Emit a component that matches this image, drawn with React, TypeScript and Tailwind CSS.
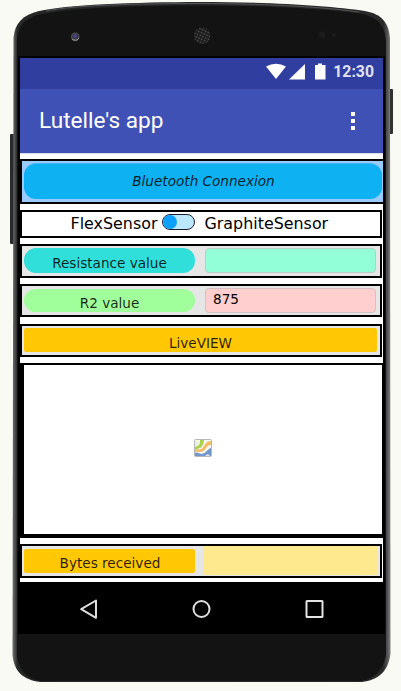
import type { ReactNode } from "react";

function DeviceShell() {
  return (
    <svg className="absolute inset-0" width="401" height="691" viewBox="0 0 401 691" aria-hidden="true">
      <defs>
        <linearGradient id="rim" x1="12" x2="391" y1="0" y2="0" gradientUnits="userSpaceOnUse">
          <stop offset="0" stopColor="#77797a" />
          <stop offset="0.008" stopColor="#4b4c4d" />
          <stop offset="0.014" stopColor="#252626" />
          <stop offset="0.98" stopColor="#29292a" />
          <stop offset="0.991" stopColor="#555456" />
          <stop offset="1" stopColor="#8b8b8b" />
        </linearGradient>
        <radialGradient id="lens">
          <stop offset="0" stopColor="#4a478b" />
          <stop offset="0.45" stopColor="#343345" />
          <stop offset="0.8" stopColor="#4a4a4b" />
          <stop offset="1" stopColor="#1c1c1c" />
        </radialGradient>
        <pattern id="mesh" width="3" height="3" patternUnits="userSpaceOnUse" patternTransform="rotate(25)">
          <rect width="3" height="3" fill="#1c1c1c" />
          <circle cx="1.5" cy="1.5" r="0.8" fill="#5a5a5a" />
        </pattern>
      </defs>
      <rect x="10" y="134" width="5" height="110" rx="1" fill="#292a2b" />
      <rect x="388" y="89" width="5" height="45" rx="1" fill="#303031" />
      <path
        d="M12.5 655 L13.5 38 C14.5 23 23 15 39 11 C65 5 133 2 201 2 C270 2 330 6 365 11 C382 14 389 23 390 39 L390.5 654 C388 672 378 680 362 682 L40 682 C24 680 14 672 12.5 655Z"
        fill="url(#rim)"
      />
      <path
        d="M17 655 L17 40 C18 25 26 17 42 14 C70 8 137 5.5 201 5.5 C268 5.5 328 9 363 14 C379 18 385 27 386 41 L386 655 C383 671 373 680 360 681 L41 681 C27 679 19 671 17 655Z"
        fill="#131313"
      />
      <path d="M46 11 C75 5 138 3.5 201 3.5 C264 3.5 325 7 359 12" fill="none" stroke="#555657" strokeWidth="1" />
      <circle cx="75.2" cy="36.8" r="4.8" fill="url(#lens)" />
      <path d="M72 39 Q76 42 79 38" fill="none" stroke="#9a9a99" strokeWidth="1" />
      <circle cx="75" cy="35.8" r="1.6" fill="#4b4692" />
      <circle cx="202.2" cy="35.8" r="8.3" fill="url(#mesh)" />
      <circle cx="322" cy="35" r="3.5" fill="#1b1b1b" />
      <circle cx="334" cy="35" r="2" fill="#1d1d1d" />
    </svg>
  );
}

function StatusBar() {
  return (
    <div className="flex h-[31px] shrink-0 items-start justify-end bg-[#303f9f] pr-[9px]">
      <svg className="mt-[5px] mr-[7px]" width="60" height="17" viewBox="0 0 60 17" fill="#fff" aria-hidden="true">
        <path d="M0 3.5 Q10 -2 20 3.5 L10 16Z" />
        <path d="M39 1 V16.5 H23Z" />
        <path d="M49 2 H52 V0.5 H56 V2 H59.5 V16.5 H49Z" />
      </svg>
      <span className="mt-[4px] font-['Roboto',sans-serif] text-[15.8px] leading-[20px] font-bold text-[#e0e2f1]">12:30</span>
    </div>
  );
}

function AppBar() {
  return (
    <div className="flex h-[64px] shrink-0 items-center justify-between bg-[#3f51b5] pr-[28px] pl-[19px] text-white">
      <h1 className="font-['Roboto',sans-serif] text-[22.6px] leading-[30px]">Lutelle's app</h1>
      <div className="flex flex-col gap-[3px]">
        <i className="size-[4px] bg-white" />
        <i className="size-[4px] bg-white" />
        <i className="size-[4px] bg-white" />
      </div>
    </div>
  );
}

function Row({ className, children }: { className: string; children: ReactNode }) {
  return <div className={`mr-px flex shrink-0 border-2 border-black ${className}`}>{children}</div>;
}

function Label({ className, children }: { className: string; children: ReactNode }) {
  return (
    <button className={`flex w-[171px] shrink-0 items-center justify-center text-[13.6px] text-black/85 ${className}`}>
      {children}
    </button>
  );
}

function MapThumb() {
  return (
    <svg width="18" height="19" viewBox="0 0 18 19" aria-hidden="true">
      <rect x="0.5" y="0.5" width="17" height="17" rx="1" fill="#f8f8f5" stroke="#b5b7bb" />
      <path d="M1.5 1.5 H4 V6 L1.5 8Z" fill="#e9f0d5" />
      <path d="M6 1 H10 C9.5 6 8 8 6 9 C4 10 2.5 10 1 11 V8 C5 7 6 5 6 1Z" fill="#a9d34d" />
      <path d="M17 2 V6 C12 5.5 12.5 12 7 13 C4 13.5 3 12 1 13 V11 C4 9.5 6 11 8 9.5 C11 7 11 2 17 2Z" fill="#f3bc68" />
      <path d="M17 9 V17 H1 V14 C4 12.5 6 16 9 14.5 C13 13.5 13 10 17 9Z" fill="#7397cc" />
      <path d="M11 17 Q14 13.5 16 17Z" fill="#dce7f4" />
    </svg>
  );
}

function NavBar() {
  return (
    <div className="flex h-[52px] shrink-0 items-center justify-between bg-black px-[59px] pt-[2px]">
      <svg width="20" height="21" viewBox="0 0 20 21" fill="none" stroke="#dedede" strokeWidth="2" strokeLinejoin="round" aria-hidden="true">
        <path d="M17 1.5 V18.8 L2.2 10.2Z" />
      </svg>
      <svg width="20" height="20" viewBox="0 0 20 20" fill="none" stroke="#dedede" strokeWidth="2" aria-hidden="true">
        <circle cx="9.5" cy="10" r="8" />
      </svg>
      <svg width="20" height="20" viewBox="0 0 20 20" fill="none" stroke="#e4e4e4" strokeWidth="2" aria-hidden="true">
        <rect x="2.5" y="2" width="16" height="16" rx="0.5" />
      </svg>
    </div>
  );
}

export default function App() {
  return (
    <main className="relative h-[691px] w-[401px] overflow-hidden bg-[#f9faf4] pt-[56px] pl-[18px] font-['DejaVu_Sans',sans-serif]">
      <DeviceShell />
      <div className="relative flex h-[578px] w-[367px] flex-col bg-black pt-[2px] pr-[2px] pl-[2px]">
        <StatusBar />
        <AppBar />
        <div className="flex h-[429px] shrink-0 flex-col border-t border-[#dadde5] bg-white pt-[5px]">
          <div className="flex h-[45px] shrink-0 border-y-2 border-l-2 border-black bg-[#99cbff] pt-[3px] pr-px pb-[3px] pl-[2px]">
            <button className="flex h-[35px] w-full items-center justify-center rounded-[12px] bg-[#0eb2f3] pl-px text-[13.6px] text-black/85 italic shadow-[0_-1px_0_#42b7f5]">
              Bluetooth Connexion
            </button>
          </div>
          <Row className="mt-[6px] h-[28px] items-center pl-[48.5px] text-[15.9px] leading-[20px] text-black">
            <span className="w-[87px] shrink-0 whitespace-nowrap">FlexSensor</span>
            <span className="mr-[10px] ml-[4px] flex h-[16px] w-[33px] shrink-0 -translate-y-[2px] items-center rounded-full border border-[#1b1c2d] bg-[#bbe8ff]">
              <i className="size-[14px] rounded-full bg-[#0da1ff]" />
            </span>
            <span>GraphiteSensor</span>
          </Row>
          <Row className="mt-[6px] h-[34px] bg-[#e6e6e6] pt-[2px] pl-[2px]">
            <Label className="h-[25px] rounded-[12px] bg-[#31dfda] pt-[5px]">Resistance value</Label>
            <div className="ml-[10px] h-[25px] w-[171px] rounded-[4px] border border-[#b9cec5] bg-[#93ffd9]" />
          </Row>
          <Row className="mt-[6px] h-[33px] bg-[#e6e6e6] pt-[2px] pl-[2px]">
            <Label className="mt-px h-[23px] rounded-[11.5px] bg-[#a0ff9b] pt-[6px]">R2 value</Label>
            <div className="ml-[10px] h-[25px] w-[171px] rounded-[4px] border border-[#d4c1c1] bg-[#ffcfcf] pl-[7px] text-[13.6px] leading-[21px] text-black">
              875
            </div>
          </Row>
          <Row className="mt-[7px] h-[33px] bg-[#e6e6e6] pt-[2px] pr-[3px] pl-[2px]">
            <button className="flex h-[24px] w-full items-center justify-center rounded-[2px] bg-[#ffc704] pt-[6px] text-[13.6px] text-black/85">
              LiveVIEW
            </button>
          </Row>
          <div className="mt-[6px] flex h-[175px] shrink-0 items-center justify-center border-t-2 border-r border-b-4 border-l-4 border-black pb-[2px]">
            <MapThumb />
          </div>
          <Row className="mt-[6px] h-[34px] bg-[#e6e6e6] pl-[2px]">
            <Label className="mt-[3px] h-[24px] rounded-[2px] bg-[#ffc704] pt-[4px] pl-px">Bytes received</Label>
            <div className="ml-[8px] h-[29px] w-[175px] bg-[#ffe98f]" />
          </Row>
        </div>
        <NavBar />
      </div>
    </main>
  );
}
